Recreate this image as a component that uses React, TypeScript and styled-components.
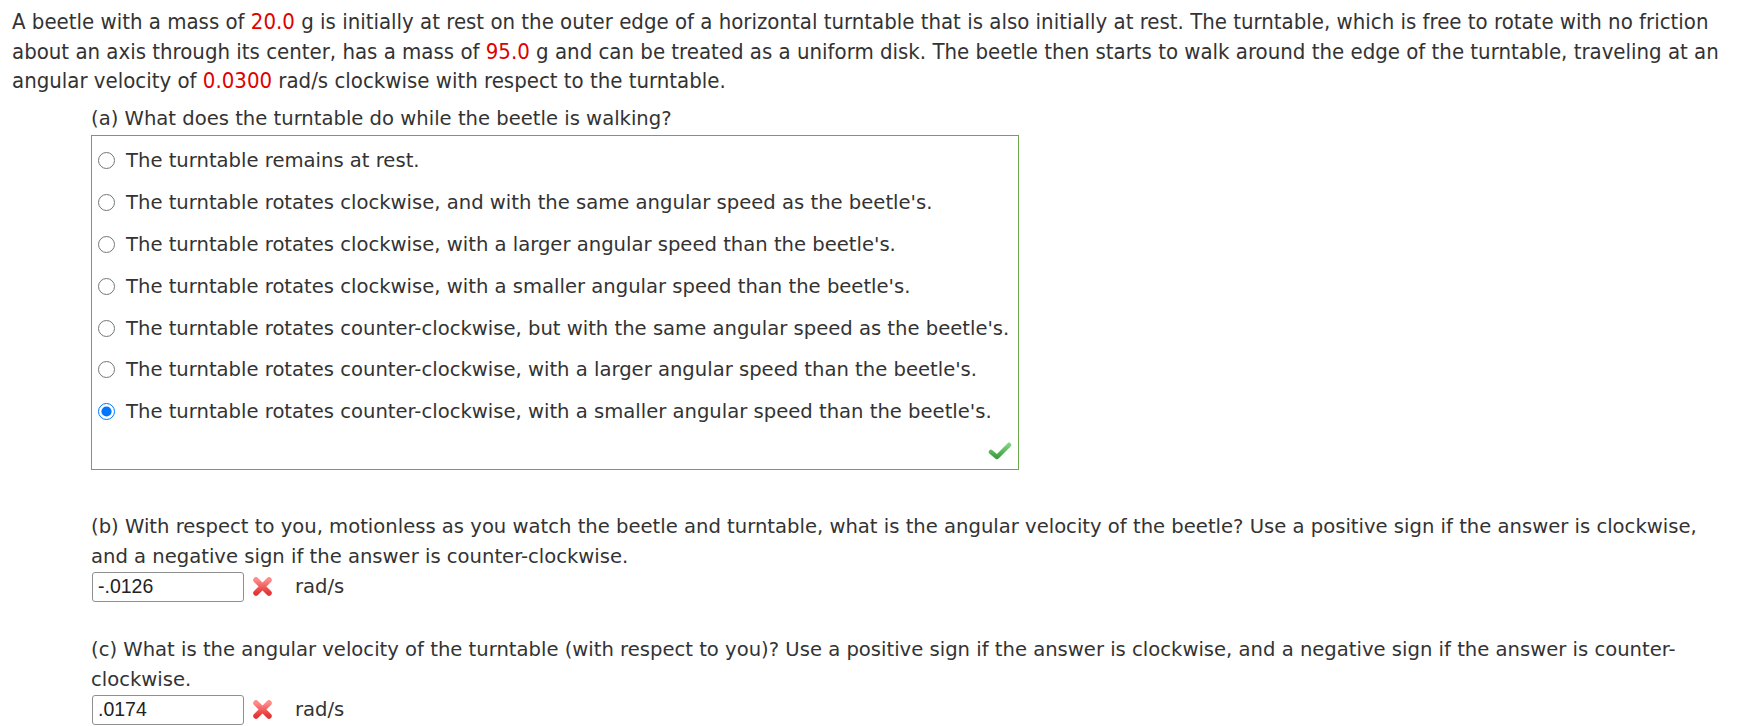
import React from "react";
import styled, { createGlobalStyle } from "styled-components";

const GlobalStyle = createGlobalStyle`
  html, body {
    margin: 0;
    padding: 0;
    background: #ffffff;
  }
  body {
    padding: 7px 0 0 12px;
    font-family: "DejaVu Sans", Verdana, sans-serif;
    color: #333333;
  }
`;

const Page = styled.div`
  width: 1712px;
`;

const Intro = styled.p`
  margin: 0;
  font-family: "DejaVu Sans Condensed", "DejaVu Sans", Tahoma, sans-serif;
  font-stretch: condensed;
  font-size: 22px;
  line-height: 29.5px;
`;

const Num = styled.span`
  color: #e00000;
`;

const Part = styled.div`
  margin-left: 79px;
  font-size: 19.6px;
`;

const Question = styled.div`
  margin-top: 7px;
  line-height: 32px;
`;

const ChoiceBox = styled.div`
  box-sizing: border-box;
  width: 928px;
  height: 335px;
  border: 1px solid #6aa84a;
  padding: 4.5px 0 0 6px;
  display: flex;
  flex-direction: column;
  position: relative;
`;

const Choice = styled.label`
  display: flex;
  align-items: center;
  gap: 11px;
  height: 41.8px;
`;

const Radio = styled.input`
  width: 17px;
  height: 17px;
  margin: 0;
  accent-color: #0075ff;
`;

const Check = styled.svg`
  position: absolute;
  right: 6px;
  bottom: 9px;
`;

const Answer = styled.div<{ $top: number }>`
  margin-top: ${(p) => p.$top}px;
`;

const AnswerText = styled.div`
  line-height: 30px;
  width: 1625px;
`;

const InputRow = styled.div`
  display: flex;
  align-items: center;
  height: 30px;
  padding-left: 1px;
`;

const Field = styled.input`
  box-sizing: border-box;
  width: 152px;
  height: 30px;
  border: 1px solid #8f8f8f;
  border-radius: 3px;
  padding: 0 5px;
  font-family: "Liberation Sans", Arial, sans-serif;
  font-size: 19.5px;
  color: #222;
  outline: none;
`;

const Unit = styled.span`
  margin-left: 22px;
`;

const choices = [
  "The turntable remains at rest.",
  "The turntable rotates clockwise, and with the same angular speed as the beetle's.",
  "The turntable rotates clockwise, with a larger angular speed than the beetle's.",
  "The turntable rotates clockwise, with a smaller angular speed than the beetle's.",
  "The turntable rotates counter-clockwise, but with the same angular speed as the beetle's.",
  "The turntable rotates counter-clockwise, with a larger angular speed than the beetle's.",
  "The turntable rotates counter-clockwise, with a smaller angular speed than the beetle's.",
];

function WrongMark() {
  return (
    <svg width="21" height="21" viewBox="0 0 21 21" style={{ marginLeft: 8 }}>
      <defs>
        <linearGradient id="xg" x1="0" y1="0" x2="0" y2="1">
          <stop offset="0" stopColor="#ff8a8a" />
          <stop offset="1" stopColor="#e53535" />
        </linearGradient>
      </defs>
      <path
        d="M4 4 L17 17 M17 4 L4 17"
        stroke="url(#xg)"
        strokeWidth="5.5"
        strokeLinecap="round"
      />
    </svg>
  );
}

function AnswerInput({ value }: { value: string }) {
  return (
    <InputRow>
      <Field defaultValue={value} />
      <WrongMark />
      <Unit>rad/s</Unit>
    </InputRow>
  );
}

export default function App() {
  return (
    <Page>
      <GlobalStyle />
      <Intro>
        A beetle with a mass of <Num>20.0</Num> g is initially at rest on the outer edge of a
        horizontal turntable that is also initially at rest. The turntable, which is free to
        rotate with no friction about an axis through its center, has a mass of{" "}
        <Num>95.0</Num> g and can be treated as a uniform disk. The beetle then starts to walk
        around the edge of the turntable, traveling at an angular velocity of{" "}
        <Num>0.0300</Num> rad/s clockwise with respect to the turntable.
      </Intro>
      <Part>
        <Question>(a) What does the turntable do while the beetle is walking?</Question>
        <ChoiceBox>
          {choices.map((c, i) => (
            <Choice key={i}>
              <Radio type="radio" name="a" defaultChecked={i === choices.length - 1} />
              {c}
            </Choice>
          ))}
          <Check width="24" height="18" viewBox="0 0 24 18">
            <defs>
              <linearGradient id="cg" x1="0" y1="0" x2="0" y2="1">
                <stop offset="0" stopColor="#7fd07f" />
                <stop offset="1" stopColor="#3f9f3f" />
              </linearGradient>
            </defs>
            <path
              d="M3 10 L9 15 L21 3"
              fill="none"
              stroke="url(#cg)"
              strokeWidth="4.5"
              strokeLinecap="round"
              strokeLinejoin="round"
            />
          </Check>
        </ChoiceBox>
        <Answer $top={42}>
          <AnswerText>
            (b) With respect to you, motionless as you watch the beetle and turntable, what is the
            angular velocity of the beetle? Use a positive sign if the answer is clockwise, and a
            negative sign if the answer is counter-clockwise.
          </AnswerText>
          <AnswerInput value="-.0126" />
        </Answer>
        <Answer $top={33}>
          <AnswerText>
            (c) What is the angular velocity of the turntable (with respect to you)? Use a positive
            sign if the answer is clockwise, and a negative sign if the answer is counter-clockwise.
          </AnswerText>
          <AnswerInput value=".0174" />
        </Answer>
      </Part>
    </Page>
  );
}
